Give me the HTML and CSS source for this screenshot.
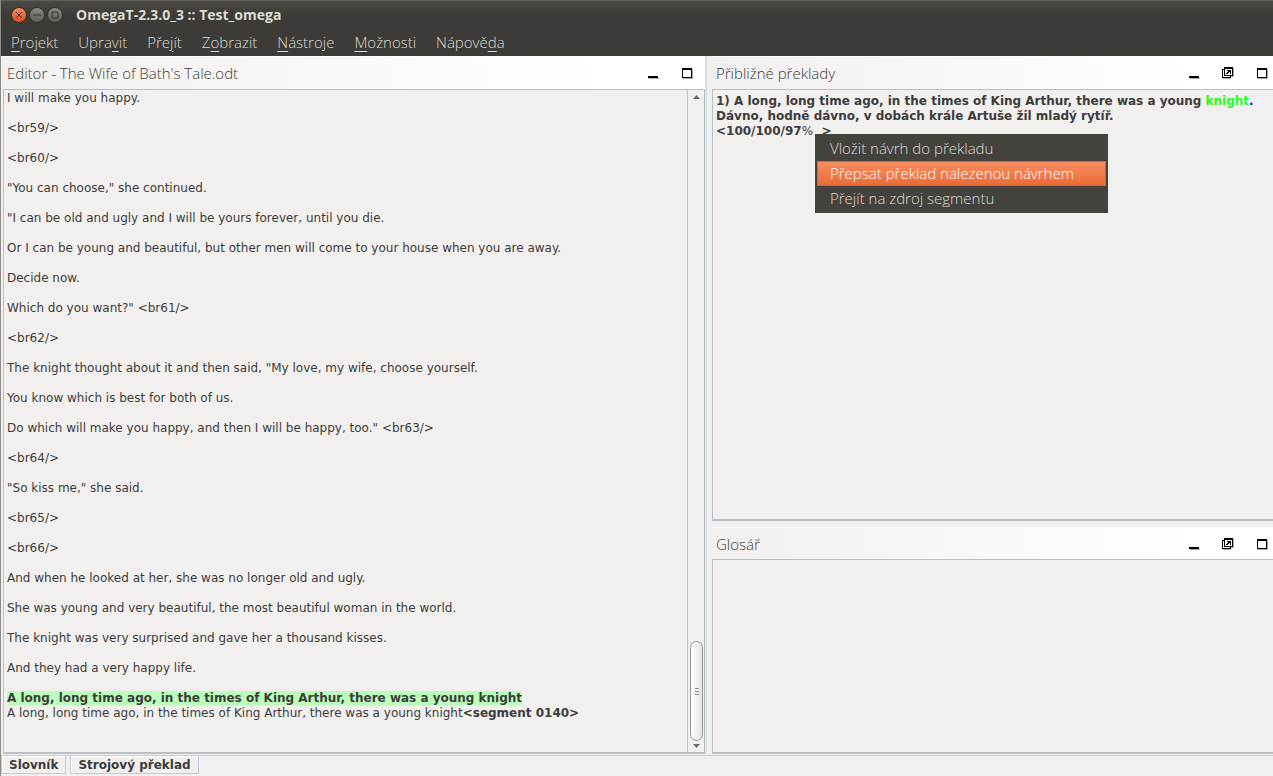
FILE: index.html
```html
<!DOCTYPE html>
<html lang="cs">
<head>
    <meta charset="UTF-8">
    <meta name="viewport" content="width=device-width, initial-scale=1.0">
    <title>OmegaT-2.3.0_3 :: Test_omega</title>
    <link rel="stylesheet" href="styles.css">
</head>
<body>

<!-- Icons shared by the panel headers -->
<svg class="sprite" aria-hidden="true">
    <symbol id="icon-min" viewBox="0 0 14 14">
        <path d="M3 12h10v1H3z" fill="#aaa"/>
        <path d="M2 10h10v2H2z"/>
    </symbol>
    <symbol id="icon-max" viewBox="0 0 14 14">
        <path d="M12 3h1v10H3v-1h9z" fill="#aaa"/>
        <path d="M2 2h10v10H2zM3 4v7h8V4z" fill-rule="evenodd"/>
    </symbol>
    <symbol id="icon-undock" viewBox="0 0 14 14">
        <path d="M12 2h1v9h-3v2H2v-1h7v-2h3z" fill="#aaa"/>
        <path d="M1 3h2v1H2v7h7v-1h1v2H1z"/>
        <path d="M3 1h9v9H3zM4 3v6h7V3z" fill-rule="evenodd"/>
        <path d="M6 4h4v4H9V6H8v1H7v1H5V7h1V6h1V5H6z"/>
    </symbol>
</svg>

<div class="window">
    <header class="titlebar">
        <button class="win-btn close" type="button" aria-label="Zavřít">
            <svg viewBox="0 0 14 14"><path d="M4 4l6 6M10 4l-6 6"/></svg>
        </button>
        <button class="win-btn" type="button" aria-label="Minimalizovat">
            <svg viewBox="0 0 14 14"><path d="M3 7h8"/></svg>
        </button>
        <button class="win-btn" type="button" aria-label="Maximalizovat">
            <svg viewBox="0 0 14 14"><path d="M4 4h6v6H4z"/></svg>
        </button>
        <h1>OmegaT-2.3.0_3 :: Test_omega</h1>
    </header>

    <nav class="menubar">
        <button type="button"><u>P</u>rojekt</button>
        <button type="button">Upra<u>v</u>it</button>
        <button type="button">Pře<u>j</u>ít</button>
        <button type="button">Z<u>o</u>brazit</button>
        <button type="button"><u>N</u>ástroje</button>
        <button type="button"><u>M</u>ožnosti</button>
        <button type="button">Nápově<u>d</u>a</button>
    </nav>

    <main class="workspace">
        <section class="panel editor">
            <div class="panel-head">
                <h2>Editor - The Wife of Bath's Tale.odt</h2>
                <button type="button" aria-label="Minimalizovat"><svg><use href="#icon-min"/></svg></button>
                <button type="button" aria-label="Maximalizovat"><svg><use href="#icon-max"/></svg></button>
            </div>
            <div class="panel-body">
                <div class="document" lang="en">
                    <p>I will make you happy.</p>
                    <p>&lt;br59/&gt;</p>
                    <p>&lt;br60/&gt;</p>
                    <p>"You can choose," she continued.</p>
                    <p>"I can be old and ugly and I will be yours forever, until you die.</p>
                    <p>Or I can be young and beautiful, but other men will come to your house when you are away.</p>
                    <p>Decide now.</p>
                    <p>Which do you want?" &lt;br61/&gt;</p>
                    <p>&lt;br62/&gt;</p>
                    <p>The knight thought about it and then said, "My love, my wife, choose yourself.</p>
                    <p>You know which is best for both of us.</p>
                    <p>Do which will make you happy, and then I will be happy, too." &lt;br63/&gt;</p>
                    <p>&lt;br64/&gt;</p>
                    <p>"So kiss me," she said.</p>
                    <p>&lt;br65/&gt;</p>
                    <p>&lt;br66/&gt;</p>
                    <p>And when he looked at her, she was no longer old and ugly.</p>
                    <p>She was young and very beautiful, the most beautiful woman in the world.</p>
                    <p>The knight was very surprised and gave her a thousand kisses.</p>
                    <p>And they had a very happy life.</p>
                    <p><mark>A long, long time ago, in the times of King Arthur, there was a young knight</mark><br>A long, long time ago, in the times of King Arthur, there was a young knight<b>&lt;segment 0140&gt;</b></p>
                </div>
                <div class="scrollbar">
                    <svg class="arrow" viewBox="0 0 14 8"><path d="M0 8L7 0L14 8z"/></svg>
                    <div class="track">
                        <div class="thumb"><i></i><i></i><i></i></div>
                    </div>
                    <svg class="arrow" viewBox="0 0 14 8"><path d="M0 0L7 8L14 0z"/></svg>
                </div>
            </div>
        </section>

        <div class="side">
            <section class="panel matches">
                <div class="panel-head">
                    <h2>Přibližné překlady</h2>
                    <button type="button" aria-label="Minimalizovat"><svg><use href="#icon-min"/></svg></button>
                    <button type="button" aria-label="Odpojit"><svg><use href="#icon-undock"/></svg></button>
                    <button type="button" aria-label="Maximalizovat"><svg><use href="#icon-max"/></svg></button>
                </div>
                <div class="panel-body">
                    <div class="match">
                        1) A long, long time ago, in the times of King Arthur, there was a young <span class="added">knight</span><span class="near">.</span><br>
                        Dávno, hodně dávno, v dobách krále Artuše žil mladý rytíř.<br>
                        &lt;100/100/97<span class="percent">%</span> &nbsp;&gt;
                    </div>
                </div>
                <!-- Context menu over the match -->
                <div class="popup">
                    <button type="button">Vložit návrh do překladu</button>
                    <button class="selected" type="button">Přepsat překlad nalezenou návrhem</button>
                    <button type="button">Přejít na zdroj segmentu</button>
                </div>
            </section>

            <section class="panel glossary">
                <div class="panel-head">
                    <h2>Glosář</h2>
                    <button type="button" aria-label="Minimalizovat"><svg><use href="#icon-min"/></svg></button>
                    <button type="button" aria-label="Odpojit"><svg><use href="#icon-undock"/></svg></button>
                    <button type="button" aria-label="Maximalizovat"><svg><use href="#icon-max"/></svg></button>
                </div>
                <div class="panel-body"></div>
            </section>
        </div>
    </main>

    <footer class="dock">
        <button type="button">Slovník</button>
        <button type="button">Strojový překlad</button>
    </footer>
</div>

</body>
</html>
```
FILE: styles.css
```css
* {
    box-sizing: border-box;
}
body {
    margin: 0;
    background-color: #f1f0ee;
    color: #3c3c3c;
    font-family: "DejaVu Sans", sans-serif;
    font-size: 12px;
    line-height: 15px;
}
h1, h2, p {
    margin: 0;
}
button {
    margin: 0;
    padding: 0;
    border: none;
    background: none;
    color: inherit;
    font: inherit;
}
.sprite {
    display: none;
}
.window {
    display: flex;
    flex-direction: column;
    min-height: 100vh;
    border-left: 1px solid #8e8c88;
    overflow: hidden;
}

/* Title bar and menu */
.titlebar {
    display: flex;
    align-items: center;
    gap: 2px;
    height: 30px;
    margin-left: -1px;
    padding-left: 11px;
    padding-bottom: 2px;
    border-top: 1px solid #5f5e59;
    background: linear-gradient(#4a4944, #3c3b37 50%);
}
.titlebar h1 {
    margin-left: 11px;
    color: #dfdbd2;
    font: bold 14px/20px "Open Sans", sans-serif;
}
.win-btn {
    width: 16px;
    height: 16px;
    border: 1px solid #34332f;
    border-radius: 50%;
    background: linear-gradient(#8b8a84, #5e5d58);
}
.win-btn.close {
    background: linear-gradient(#f58a5e, #e2501c);
}
.win-btn svg {
    display: block;
    width: 14px;
    height: 14px;
    fill: none;
    stroke: #33322e;
}
.menubar {
    display: flex;
    height: 26px;
    margin-left: -1px;
    padding-left: 1px;
    background-color: #3c3b37;
    color: #dfdbd2;
}
.menubar button {
    padding: 0 10px 2px;
    font: 300 15px/24px "Open Sans", sans-serif;
}
.menubar u {
    text-underline-offset: 3px;
}

/* Panels */
.workspace {
    display: grid;
    grid-template-columns: 706fr 561fr;
    gap: 5px;
    flex: 1;
}
.side {
    display: flex;
    flex-direction: column;
    gap: 6px;
    min-width: 0;
}
.panel {
    position: relative;
    display: flex;
    flex-direction: column;
    min-width: 0;
}
.editor {
    padding-left: 2px;
    border-right: 2px solid #d5e1ea;
}
.matches {
    flex: 465 1 0;
}
.glossary {
    flex: 227 1 0;
}
.panel-head {
    display: flex;
    align-items: center;
    gap: 20px;
    height: 33px;
    padding: 0 4px;
    border-top: 1px solid #fff;
    background: linear-gradient(to right, #f1f0ee, #fff 85%);
}
.panel-head h2 {
    flex: 1;
    color: #3c3c3c;
    font: 300 15px/20px "Open Sans", sans-serif;
}
.panel-head button,
.panel-head svg {
    display: block;
    width: 14px;
    height: 14px;
}
.editor .panel-head {
    padding-right: 11px;
}
.glossary .panel-head {
    height: 32px;
}
.panel-body {
    display: flex;
    flex: 1;
    border: 1px solid #b8bfc5;
    border-bottom-width: 2px;
}
.side .panel-body {
    border-right: none;
}
.document {
    display: flex;
    flex: 1;
    flex-direction: column;
    gap: 15px;
    padding: 1px 3px;
}
mark {
    background-color: #b9ffb9;
    color: inherit;
    font-weight: bold;
}
.match {
    padding: 4px 0 4px 3px;
    font-weight: bold;
    white-space: nowrap;
}
.added {
    color: #1fff1f;
}
.near {
    color: #2020c0;
}
.percent {
    font-weight: normal;
}

/* Scrollbar */
.scrollbar {
    display: flex;
    flex-direction: column;
    align-items: center;
    gap: 3px;
    width: 17px;
    padding: 5px 0 4px 1px;
    border-left: 1px solid #b8bfc5;
}
.arrow {
    width: 7px;
    height: 4px;
    fill: #6a6a6a;
}
.track {
    display: flex;
    flex: 1;
    flex-direction: column;
    justify-content: flex-end;
}
.thumb {
    display: flex;
    flex-direction: column;
    align-items: center;
    justify-content: center;
    gap: 2px;
    width: 13px;
    height: 100px;
    border: 1px solid #979797;
    border-radius: 7px;
    background: linear-gradient(to right, #fff, #e4e3e1);
}
.thumb i {
    width: 4px;
    height: 1px;
    background-color: #8c8c8c;
}

/* Context menu */
.popup {
    position: absolute;
    top: 78px;
    left: 103px;
    width: 293px;
    padding: 2px;
    background-color: #43423d;
    color: #dfdbd2;
}
.popup button {
    display: block;
    width: 100%;
    height: 25px;
    padding: 0 12px;
    border: 1px solid transparent;
    font: 300 15px/23px "Open Sans", sans-serif;
    text-align: left;
    white-space: nowrap;
}
.popup .selected {
    border-color: #d9602f;
    background: linear-gradient(#f98d62, #ea6c37);
    color: #fff;
}

/* Minimized panels */
.dock {
    display: flex;
    gap: 4px;
    height: 21px;
    margin-top: 1px;
    padding-bottom: 2px;
    border-top: 1px solid #b9cfe0;
}
.dock button {
    padding: 2px 7px 0;
    border: 1px solid #b9cfe0;
    border-top: none;
    box-shadow: inset 1px 1px #fff;
    font-weight: bold;
}
```
